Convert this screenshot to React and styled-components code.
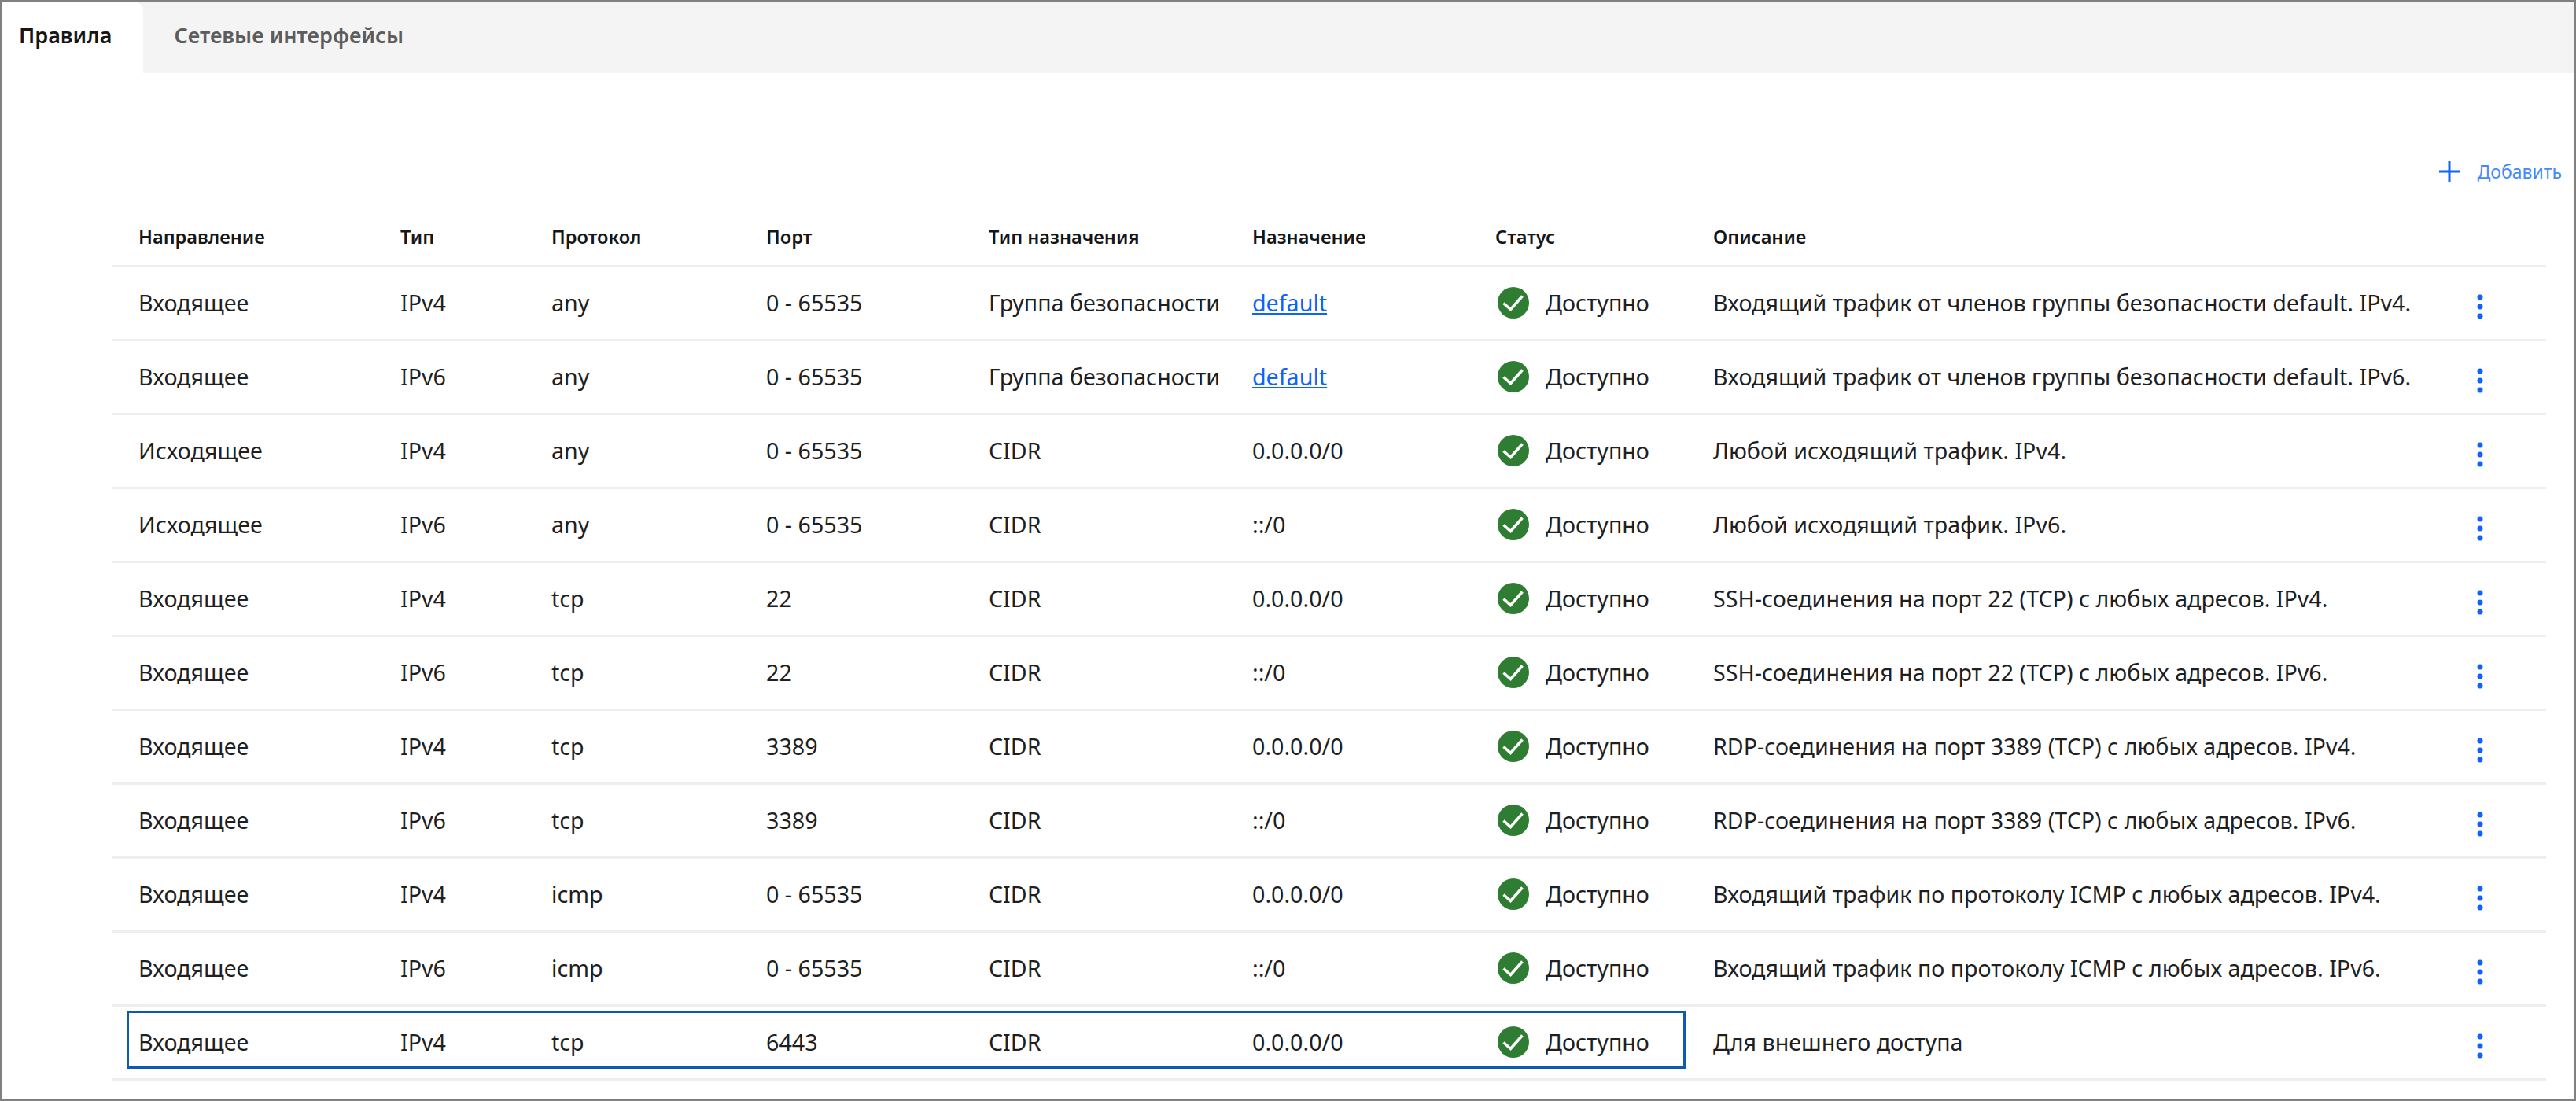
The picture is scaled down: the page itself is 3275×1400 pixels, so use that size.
import React from 'react';
import styled, { createGlobalStyle } from 'styled-components';

const GlobalStyle = createGlobalStyle`
  html, body { margin: 0; padding: 0; background: #fff; }
  * { box-sizing: border-box; }
`;

const COLUMNS = '333px 192px 273px 283px 335px 309px 277px 971px 1fr';

const Page = styled.div`
  width: 3275px;
  height: 1400px;
  border: 2px solid #808080;
  background: #fff;
  overflow: hidden;
  font-family: 'Noto Sans', sans-serif;
  color: #1f1f1f;
`;

const TabBar = styled.div`
  display: flex;
  height: 91px;
  background: #f4f4f4;
`;

const Tab = styled.div`
  display: flex;
  align-items: center;
  height: 100%;
  padding: 0 ${p => (p.$active ? '40px' : '39px')} 6px ${p => (p.$active ? '22px' : '39px')};
  font-size: 27px;
  font-weight: 600;
  color: ${p => (p.$active ? '#161616' : '#5c5c5c')};
  background: ${p => (p.$active ? '#fff' : 'transparent')};
  border-top-right-radius: ${p => (p.$active ? '12px' : '0')};
`;

const Toolbar = styled.div`
  display: flex;
  justify-content: flex-end;
  padding: 109px 16px 12px 0;
`;

const AddButton = styled.button`
  display: flex;
  align-items: center;
  gap: 23px;
  padding: 0;
  border: 0;
  background: none;
  font-family: inherit;
  font-size: 23px;
  color: #4589ff;
  svg { color: #0f62fe; }
`;

const Table = styled.div`
  margin: 0 36px 0 141px;
`;

const Row = styled.div`
  position: relative;
  display: grid;
  grid-template-columns: ${COLUMNS};
  height: 94px;
  align-items: center;
  border-bottom: 3px solid #eee;
  padding: 0 0 2px 33px;
  font-size: 28.65px;
`;

const HeaderRow = styled(Row)`
  padding-top: 19px;
  padding-bottom: 0;
  font-size: 23.6px;
  font-weight: 600;
  color: #161616;
`;

const Link = styled.a`
  color: #0f62fe;
  text-decoration: underline;
`;

const Status = styled.div`
  display: flex;
  align-items: center;
  gap: 21px;
  padding-left: 3px;
`;

const Menu = styled.div`
  display: flex;
  padding-top: 10px;
  color: #0f62fe;
`;

const Focus = styled.div`
  position: absolute;
  left: 18px;
  top: 5px;
  width: 1982px;
  height: 74px;
  border: 3px solid #0b5cb0;
  pointer-events: none;
`;

const rows = [
  ['Входящее', 'IPv4', 'any', '0 - 65535', 'Группа безопасности', 'default', 'Входящий трафик от членов группы безопасности default. IPv4.'],
  ['Входящее', 'IPv6', 'any', '0 - 65535', 'Группа безопасности', 'default', 'Входящий трафик от членов группы безопасности default. IPv6.'],
  ['Исходящее', 'IPv4', 'any', '0 - 65535', 'CIDR', '0.0.0.0/0', 'Любой исходящий трафик. IPv4.'],
  ['Исходящее', 'IPv6', 'any', '0 - 65535', 'CIDR', '::/0', 'Любой исходящий трафик. IPv6.'],
  ['Входящее', 'IPv4', 'tcp', '22', 'CIDR', '0.0.0.0/0', 'SSH-соединения на порт 22 (TCP) с любых адресов. IPv4.'],
  ['Входящее', 'IPv6', 'tcp', '22', 'CIDR', '::/0', 'SSH-соединения на порт 22 (TCP) с любых адресов. IPv6.'],
  ['Входящее', 'IPv4', 'tcp', '3389', 'CIDR', '0.0.0.0/0', 'RDP-соединения на порт 3389 (TCP) с любых адресов. IPv4.'],
  ['Входящее', 'IPv6', 'tcp', '3389', 'CIDR', '::/0', 'RDP-соединения на порт 3389 (TCP) с любых адресов. IPv6.'],
  ['Входящее', 'IPv4', 'icmp', '0 - 65535', 'CIDR', '0.0.0.0/0', 'Входящий трафик по протоколу ICMP с любых адресов. IPv4.'],
  ['Входящее', 'IPv6', 'icmp', '0 - 65535', 'CIDR', '::/0', 'Входящий трафик по протоколу ICMP с любых адресов. IPv6.'],
  ['Входящее', 'IPv4', 'tcp', '6443', 'CIDR', '0.0.0.0/0', 'Для внешнего доступа'],
];

const headers = ['Направление', 'Тип', 'Протокол', 'Порт', 'Тип назначения', 'Назначение', 'Статус', 'Описание'];

const CheckIcon = () => (
  <svg width="40" height="40" viewBox="0 0 40 40">
    <circle cx="20" cy="20" r="20" fill="#2e7d32" />
    <path d="M7.5 20.5l9 8 15-17" fill="none" stroke="#fff" strokeWidth="3.6" />
  </svg>
);

const PlusIcon = () => (
  <svg width="26" height="26" viewBox="0 0 26 26">
    <path d="M13 0v26M0 13h26" stroke="currentColor" strokeWidth="3" />
  </svg>
);

const DotsIcon = () => (
  <svg width="8" height="32" viewBox="0 0 8 32">
    <circle cx="4" cy="4" r="3.5" fill="currentColor" />
    <circle cx="4" cy="16" r="3.5" fill="currentColor" />
    <circle cx="4" cy="28" r="3.5" fill="currentColor" />
  </svg>
);

export default function App() {
  return (
    <Page>
      <GlobalStyle />
      <TabBar>
        <Tab $active>Правила</Tab>
        <Tab>Сетевые интерфейсы</Tab>
      </TabBar>
      <Toolbar>
        <AddButton><PlusIcon />Добавить</AddButton>
      </Toolbar>
      <Table>
        <HeaderRow>
          {headers.map(h => <div key={h}>{h}</div>)}
        </HeaderRow>
        {rows.map((r, i) => (
          <Row key={i}>
            <div>{r[0]}</div>
            <div>{r[1]}</div>
            <div>{r[2]}</div>
            <div>{r[3]}</div>
            <div>{r[4]}</div>
            <div>{r[5] === 'default' ? <Link href="#">default</Link> : r[5]}</div>
            <Status><CheckIcon />Доступно</Status>
            <div>{r[6]}</div>
            <Menu><DotsIcon /></Menu>
            {i === rows.length - 1 && <Focus />}
          </Row>
        ))}
      </Table>
    </Page>
  );
}
